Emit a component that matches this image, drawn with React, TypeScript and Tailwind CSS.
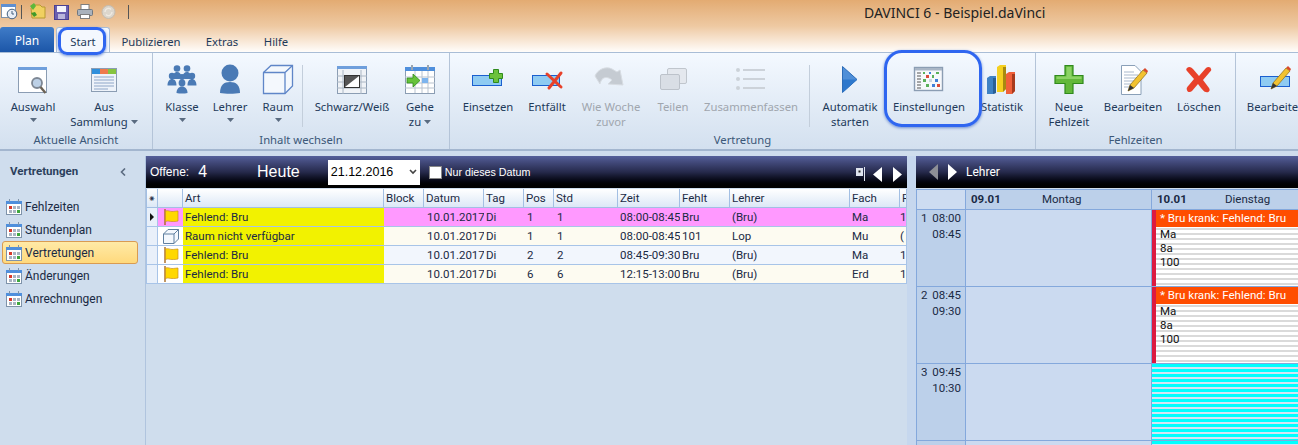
import type { ReactNode } from 'react';

const Caret = () => (
  <svg width="7" height="4" viewBox="0 0 7 4" className="inline-block">
    <path d="M0 0h7L3.5 4z" fill="#5a6b80" />
  </svg>
);

const IconBox = ({ children }: { children: ReactNode }) => (
  <svg width="40" height="36" viewBox="0 0 40 36">{children}</svg>
);

const BlueBar = () => <rect x="4.5" y="16.5" width="29" height="10" fill="#8fcbf2" stroke="#1a5fd0" />;

const icons: Record<string, ReactNode> = {
  auswahl: (
    <IconBox>
      <rect x="5.5" y="7.5" width="28" height="25" fill="#fff" stroke="#8b9db3" />
      <rect x="5" y="7" width="29" height="3" fill="#6f9fdc" />
      <circle cx="24" cy="23" r="5" fill="#bcd0e6" stroke="#7d8794" strokeWidth="1.8" />
      <path d="M27.5 27l5 6" stroke="#6b6255" strokeWidth="2.4" />
    </IconBox>
  ),
  sammlung: (
    <IconBox>
      <rect x="7.5" y="8.5" width="25" height="23" fill="#eef3fa" stroke="#8b9db3" />
      <rect x="8" y="9" width="8" height="5" fill="#2f8fdc" />
      <rect x="16" y="9" width="8" height="5" fill="#ef7a4c" />
      <rect x="24" y="9" width="8" height="5" fill="#86c440" />
      <path d="M10 17h20M10 20h20M10 23h20M10 26h20M10 29h14" stroke="#8ea6c8" />
    </IconBox>
  ),
  klasse: (
    <IconBox>
      <g fill="#4a7ab5">
        <circle cx="15" cy="8.5" r="3.3" />
        <circle cx="25" cy="8.5" r="3.3" />
        <circle cx="10" cy="16" r="3.2" />
        <circle cx="30" cy="16" r="3.2" />
        <circle cx="20" cy="17" r="3" />
        <path d="M10.5 19c0-5 2-7 4.500-7s4.500 2 4.500 5l-2 2zM20.500 17c0-3 2-5 4.500-5s4.500 2 4.500 7h-7z" />
        <path d="M5.500 25.500c0-4 2-6.500 4.500-6.500s4.500 2 4.500 6.500zM25.500 25.500c0-4.500 2-6.500 4.500-6.500s4.500 2.500 4.500 6.500z" />
        <circle cx="20" cy="23" r="3.4" />
        <path d="M14.500 33c0-4 2.500-6.500 5.500-6.500s5.500 2.500 5.500 6.500c-3 .8-8 .8-11 0z" />
      </g>
    </IconBox>
  ),
  lehrer: (
    <IconBox>
      <g fill="#4a7ab5">
        <circle cx="20" cy="13" r="8.5" />
        <path d="M10 33c0-8 4-11 10-11s10 3 10 11c-5 1-15 1-20 0z" />
      </g>
    </IconBox>
  ),
  raum: (
    <IconBox>
      <path d="M5.500 12.500L13 5.500H34.500V26L27 33.500H5.500z" fill="#f4f8fd" stroke="#5f86c8" strokeWidth="1.3" />
      <path d="M5.500 12.500H27V33.500M27 12.500L34.500 5.500" fill="none" stroke="#5f86c8" strokeWidth="1.3" />
    </IconBox>
  ),
  schwarz: (
    <IconBox>
      <rect x="5.5" y="8.5" width="29" height="25" fill="#f0f3f7" stroke="#8b9db3" />
      <rect x="5" y="6" width="30" height="3" fill="#6f9fdc" />
      <path d="M5 16h30M5 22h30M5 28h30M11 10v24M29 10v24" stroke="#aab6c4" />
      <rect x="12.5" y="15.5" width="15" height="12" fill="#fff" stroke="#333" />
      <path d="M13 27V16H27z" fill="#555" />
    </IconBox>
  ),
  gehe: (
    <IconBox>
      <rect x="5.5" y="8.5" width="29" height="25" fill="#fff" stroke="#8b9db3" />
      <rect x="5" y="7" width="30" height="4" fill="#4f8fdc" />
      <rect x="11" y="5" width="2" height="5" fill="#9aa5b0" />
      <rect x="27" y="5" width="2" height="5" fill="#9aa5b0" />
      <path d="M5 17h30M5 23h30M5 28h30M15 11v22M22 11v22M28 11v22" stroke="#b9c3cf" />
      <rect x="22" y="18" width="6" height="5" fill="#7db4ee" />
      <path d="M7 18h6v-4l7 6.500-7 6.500v-4H7z" fill="#66c23a" stroke="#2f8a1c" strokeWidth=".8" />
    </IconBox>
  ),
  einsetzen: (
    <IconBox>
      <rect x="4.5" y="15.5" width="29" height="10" fill="#8fcbf2" stroke="#1a5fd0" />
      <path d="M21.500 13.500h4v-4h5v4h4v5h-4v4h-5v-4h-4z" fill="#6cc23c" stroke="#2f8a1c" />
    </IconBox>
  ),
  entfaellt: (
    <IconBox>
      <rect x="5.5" y="15.5" width="27" height="10" fill="#8fcbf2" stroke="#1a5fd0" />
      <path d="M20 14l14 13M34 13L22 28" stroke="#e8412a" strokeWidth="3" strokeLinecap="round" />
    </IconBox>
  ),
  woche: (
    <IconBox>
      <path d="M4 16c3-7 11-10 17-7l5 3 3-2 3 15-15-1 4-4c-3-3-9-4-11 1-1 2-1 3-1 3z" fill="#c5cbd2" stroke="#d7dce2" />
    </IconBox>
  ),
  teilen: (
    <IconBox>
      <rect x="14.5" y="8.5" width="19" height="15" rx="1.5" fill="#e4e8ee" stroke="#c0c6cd" />
      <rect x="7.5" y="14.5" width="19" height="15" rx="1.5" fill="#d9dee5" stroke="#bcc2ca" />
    </IconBox>
  ),
  zusammen: (
    <IconBox>
      <g fill="#ccd2d9">
        <circle cx="7" cy="10" r="2" />
        <circle cx="7" cy="19" r="2" />
        <circle cx="7" cy="28" r="2" />
        <rect x="12" y="9" width="22" height="2" />
        <rect x="12" y="18" width="22" height="2" />
        <rect x="12" y="27" width="22" height="2" />
      </g>
    </IconBox>
  ),
  auto: (
    <IconBox>
      <path d="M12.500 6.500L27 19.500 12.500 32.500z" fill="#4f8fd8" stroke="#2c6cb8" />
      <path d="M13 19.500h14L13 32z" fill="#2e78cc" />
    </IconBox>
  ),
  einstellungen: (
    <IconBox>
      <rect x="5.5" y="7.5" width="28" height="23" fill="#f6f8fb" stroke="#8b9db3" strokeWidth="1.4" />
      <rect x="6" y="8" width="27" height="2.5" fill="#a9b6c6" />
      <path d="M8 13h4M8 16h4M8 19h4M8 22h4M8 25h4M8 28h4" stroke="#555" />
      <g>
        <rect x="14" y="12" width="2" height="2" fill="#5bb05b" />
        <rect x="20" y="12" width="2" height="2" fill="#3f7fd8" />
        <rect x="27" y="12" width="3" height="2" fill="#5bb05b" />
        <rect x="17" y="15" width="3" height="3" fill="#d94a3a" />
        <rect x="23" y="15" width="2" height="3" fill="#5bb05b" />
        <rect x="14" y="19" width="3" height="3" fill="#5bb05b" />
        <rect x="20" y="19" width="3" height="3" fill="#c9d4e0" />
        <rect x="26" y="19" width="3" height="3" fill="#3f7fd8" />
        <rect x="17" y="24" width="3" height="3" fill="#5bb05b" />
        <rect x="23" y="24" width="3" height="3" fill="#3f7fd8" />
        <rect x="28" y="24" width="3" height="3" fill="#d94a3a" />
      </g>
    </IconBox>
  ),
  statistik: (
    <IconBox>
      <path d="M5 18l3-2h6v17l-3 1H5z" fill="#3f82c4" />
      <path d="M11 18h3v15l-3 1z" fill="#2a5f96" />
      <path d="M15 7l3-2h6v24l-3 3h-6z" fill="#f5d020" />
      <path d="M21 7h3v22l-3 3z" fill="#a88a10" />
      <path d="M24 14l3-2h6v19l-3 3h-6z" fill="#f0603a" />
      <path d="M30 14h3v17l-3 3z" fill="#a83a1c" />
    </IconBox>
  ),
  neue: (
    <IconBox>
      <path d="M16 5.500h8v10h10v8H24v10h-8v-10H6v-8h10z" fill="#62b83a" stroke="#2f8a1c" strokeWidth="1.2" />
      <path d="M17.500 7h5v9.500h10v2.500h-25v-2.500h10z" fill="#8bd364" />
    </IconBox>
  ),
  bearbeiten: (
    <IconBox>
      <path d="M8.500 5.500H22l6 6v23H8.500z" fill="#fff" stroke="#8aa0b8" />
      <path d="M11 12h10M11 15h14M11 18h14M11 21h10M11 24h8M11 27h6" stroke="#a9b9cd" />
      <path d="M15 31l2-6L30 10l4 3-13 15z" fill="#f2c230" stroke="#8a6a15" strokeWidth=".7" />
      <path d="M30 10l4 3 1-2-3-3z" fill="#d9492b" />
      <path d="M15 31l2-6 4 3z" fill="#333" />
    </IconBox>
  ),
  loeschen: (
    <IconBox>
      <path d="M8 8c2-2 4-1 6 1l6 7 7-8c2-2 5-1 5 1 1 1-1 3-2 4l-6 7 6 8c2 3-1 5-3 4-2 0-3-2-5-4l-3-4-6 7c-2 2-5 1-5-1-1-2 1-4 2-5l5-6-7-8c-1-1-1-2 0-3z" fill="#e8412a" />
    </IconBox>
  ),
  bearbeite2: (
    <IconBox>
      <BlueBar />
      <path d="M15 29l2-6L30 8l4 3-13 15z" fill="#f2c230" stroke="#8a6a15" strokeWidth=".7" />
      <path d="M30 8l4 3 1-2-3-3z" fill="#d9492b" />
      <path d="M15 29l2-6 4 3z" fill="#333" />
    </IconBox>
  ),
};

type Btn = { w: string; icon: string; a: string; b?: string; caret?: 'below' | 'inline'; off?: boolean };

const RibbonButton = ({ w, icon, a, b, caret, off }: Btn) => (
  <div className={`flex flex-col items-center shrink-0 leading-[15px] whitespace-nowrap ${w} ${off ? 'text-[#a0a6ae]' : 'text-[#1e3a5a]'}`}>
    <div className="h-[36px] mb-[3px] flex justify-center">{icons[icon]}</div>
    <div>{a}</div>
    {b && (
      <div className="flex items-center gap-[3px]">
        {b}
        {caret === 'inline' && <Caret />}
      </div>
    )}
    {caret === 'below' && (
      <div className="h-[11px] flex items-center">
        <Caret />
      </div>
    )}
  </div>
);

const Group = ({ w, label, pl, children }: { w: string; label?: string; pl: string; children: ReactNode }) => (
  <div className={`flex flex-col shrink-0 border-r border-[#b4c4d8] ${w}`}>
    <div className={`flex h-[80px] pt-[7px] ${pl}`}>{children}</div>
    <div className="h-[14px] text-center leading-[14px] text-[#3c5878]">{label}</div>
  </div>
);

const Sep = () => <div className="w-px h-[62px] mt-[5px] bg-[#c3cedb] shrink-0" />;

const CalIcon = () => (
  <svg width="16" height="16" viewBox="0 0 16 16" className="shrink-0">
    <rect x=".5" y="2.5" width="15" height="13" fill="#fff" stroke="#7f93aa" />
    <rect x="0" y="2" width="16" height="3" fill="#4f8fdc" />
    <rect x="3" y="0" width="1" height="3" fill="#7f93aa" />
    <rect x="12" y="0" width="1" height="3" fill="#7f93aa" />
    <rect x="3" y="7" width="3" height="3" fill="#d9392b" />
    <rect x="7" y="7" width="3" height="3" fill="#a9b4c2" />
    <rect x="11" y="7" width="3" height="3" fill="#a9b4c2" />
    <rect x="3" y="11" width="3" height="3" fill="#a9b4c2" />
    <rect x="7" y="11" width="3" height="3" fill="#a9b4c2" />
    <rect x="11" y="11" width="3" height="3" fill="#3fa83f" />
  </svg>
);

const Flag = () => (
  <svg width="16" height="16" viewBox="0 0 16 16">
    <path d="M2 0v16" stroke="#a86a20" strokeWidth="1.4" />
    <path d="M2.500 2c3-1 4 .5 6.500.5s4-.5 6-.5v10c-2 .5-3.500.5-6 .5s-3.500-1-6.500 0z" fill="#ffd800" stroke="#c99020" strokeWidth=".7" />
  </svg>
);

const Cube = () => (
  <svg width="16" height="16" viewBox="0 0 16 16">
    <path d="M.5 6L5 1.500h10.500V11L11 15.500H.5z" fill="#f4f8fd" stroke="#5f7f9f" />
    <path d="M.5 6H11v9.500M11 6l4.500-4.500" fill="none" stroke="#5f7f9f" />
  </svg>
);

const tableCols = 'grid grid-cols-[12px_25px_201px_40px_60px_40px_30px_64px_62px_50px_120px_50px_7px]';

const heads = ['Art', 'Block', 'Datum', 'Tag', 'Pos', 'Std', 'Zeit', 'Fehlt', 'Lehrer', 'Fach', 'R'];

const rows = [
  { icon: 'flag', art: 'Fehlend: Bru', tag: 'Di', pos: '1', std: '1', zeit: '08:00-08:45', fehlt: 'Bru', lehrer: '(Bru)', fach: 'Ma', r: '1', bg: 'bg-[#ff99ff]', head: 'bg-[#e9f0fa]', ic: 'bg-[#ff99ff]', cur: true },
  { icon: 'cube', art: 'Raum nicht verfügbar', tag: 'Di', pos: '1', std: '1', zeit: '08:00-08:45', fehlt: '101', lehrer: 'Lop', fach: 'Mu', r: '(', bg: 'bg-[#fdfbf1]', head: 'bg-[#e9f0fa]', ic: 'bg-white' },
  { icon: 'flag', art: 'Fehlend: Bru', tag: 'Di', pos: '2', std: '2', zeit: '08:45-09:30', fehlt: 'Bru', lehrer: '(Bru)', fach: 'Ma', r: '1', bg: 'bg-[#f2f6fd]', head: 'bg-[#e9f0fa]', ic: 'bg-white' },
  { icon: 'flag', art: 'Fehlend: Bru', tag: 'Di', pos: '6', std: '6', zeit: '12:15-13:00', fehlt: 'Bru', lehrer: '(Bru)', fach: 'Erd', r: '1', bg: 'bg-[#fdfbf1]', head: 'bg-[#e9f0fa]', ic: 'bg-white' },
];

const Cell = ({ children, cls = '' }: { children?: ReactNode; cls?: string }) => (
  <div className={`overflow-hidden whitespace-nowrap border-b border-[#a8c4e8] h-[19px] leading-[18px] ${cls}`}>{children}</div>
);

const DarkBar = ({ children }: { children: ReactNode }) => (
  <div className="flex items-center h-[32px] text-white bg-gradient-to-b from-[#555f9a] via-[#262a4c] to-[#000000]">{children}</div>
);

const stripesGray = 'bg-[repeating-linear-gradient(to_bottom,#ffffff_0px,#ffffff_3px,#dadada_3px,#dadada_5px)]';
const stripesCyan = 'bg-[repeating-linear-gradient(to_bottom,#00ffff_0px,#00ffff_3px,#d4e4f4_3px,#d4e4f4_5px)]';

const Lesson = () => (
  <div className="flex h-[77px] border-b border-[#84a8dc]">
    <div className="w-[4px] bg-[#dc1a40]" />
    <div className={`flex-1 ${stripesGray}`}>
      <div className="h-[17px] pl-[4px] leading-[16px] bg-[#ff4d00] text-white whitespace-nowrap text-[11.6px]">* Bru krank: Fehlend: Bru</div>
      <div className="pl-[4px] leading-[14px] text-[#111]">Ma</div>
      <div className="pl-[4px] leading-[14px] text-[#111]">8a</div>
      <div className="pl-[4px] leading-[14px] text-[#111]">100</div>
    </div>
  </div>
);

const TimeCell = ({ n, a, b }: { n: string; a: string; b: string }) => (
  <div className="flex h-[77px] border-b border-r border-[#84a8dc] bg-[#bcd0ea] px-[4px] text-[#1a2a44] leading-[16px]">
    <div className="w-[14px]">{n}</div>
    <div className="flex-1 text-right">
      <div>{a}</div>
      <div>{b}</div>
    </div>
  </div>
);

export default function App() {
  return (
    <div className="relative w-[1298px] h-[445px] overflow-hidden bg-[#cfdded] text-[11.3px] font-['Noto_Sans',sans-serif]">
      {/* title bar with tabs */}
      <div className="h-[52px] bg-gradient-to-b from-[#e3ab72] via-[#eec9a2] to-[#fffdfb]">
        <div className="flex items-start h-[27px] pl-[1px] relative">
          <svg width="130" height="20" viewBox="0 0 130 20">
            <rect x=".5" y="4.5" width="14" height="13" fill="#fff" stroke="#7f93aa" />
            <rect x="0" y="4" width="15" height="3" fill="#5f8fd0" />
            <circle cx="11" cy="14" r="4.8" fill="#e8eef6" stroke="#44607f" />
            <path d="M11 11v3h2" stroke="#44607f" fill="none" />
            <path d="M20.500 5v14M127.500 5v14" stroke="#555" />
            <path d="M30 8l4-3h5l2 2h3v11H31z" fill="#f0d060" stroke="#b89a30" />
            <path d="M29 6l4-3 2 3-3 4z" fill="#5cb83a" />
            <path d="M33 17l-3-4 4-1 2 3z" fill="#3f9a2a" />
            <rect x="53.5" y="5.5" width="14" height="14" fill="#6a5fb0" stroke="#4a4090" />
            <rect x="56" y="6" width="9" height="6" fill="#f4f4fb" />
            <rect x="57" y="14" width="7" height="5" fill="#b9b5dc" />
            <rect x="80" y="4.5" width="8" height="5" fill="#fff" stroke="#7f7f7f" />
            <rect x="76.5" y="9.5" width="15" height="6" rx="1" fill="#aab2bc" stroke="#6f7780" />
            <rect x="79.5" y="14.5" width="9" height="4" fill="#fff" stroke="#7f7f7f" />
            <circle cx="107.5" cy="12" r="6.5" fill="#dcd6cc" stroke="#c4bcb0" />
            <path d="M104 12a3.500 3.500 0 016-2.500M111 12a3.500 3.500 0 01-6 2.500" stroke="#efeae2" fill="none" strokeWidth="1.4" />
          </svg>
          <div className="absolute left-[864px] top-[3px] text-[14px] leading-[20px] text-[#222] whitespace-nowrap">DAVINCI 6 - Beispiel.daVinci</div>
        </div>
        <div className="flex h-[25px] items-end">
          <div className="w-[54px] h-[25px] rounded-t-[3px] bg-gradient-to-b from-[#3f7cc8] to-[#1c56a8] text-white text-center leading-[27px] text-[12px]">Plan</div>
          <div className="w-[54px] ml-[2px] h-[25px] rounded-t-[3px] bg-[#f4f8fe] border border-b-0 border-[#a9bdd6] text-center leading-[28px] text-[#1e3a5a]">Start</div>
          <div className="w-[74px] ml-[4px] text-center leading-[20px] text-[#1e3a5a]">Publizieren</div>
          <div className="w-[50px] ml-[9px] text-center leading-[20px] text-[#1e3a5a]">Extras</div>
          <div className="w-[40px] ml-[9px] text-center leading-[20px] text-[#1e3a5a]">Hilfe</div>
        </div>
      </div>

      {/* ribbon */}
      <div className="flex h-[99px] border-t border-b-2 border-t-[#a9bdd6] border-b-[#a3b6cf] bg-gradient-to-b from-[#f4f9ff] to-[#d3e0ef]">
        <Group w="w-[153px]" pl="" label="Aktuelle Ansicht">
          <RibbonButton w="w-[66px]" icon="auswahl" a="Auswahl" caret="below" />
          <RibbonButton w="w-[76px]" icon="sammlung" a="Aus" b="Sammlung" caret="inline" />
        </Group>
        <Group w="w-[297px]" pl="pl-[5px]" label="Inhalt wechseln">
          <RibbonButton w="w-[48px]" icon="klasse" a="Klasse" caret="below" />
          <RibbonButton w="w-[48px]" icon="lehrer" a="Lehrer" caret="below" />
          <RibbonButton w="w-[48px]" icon="raum" a="Raum" caret="below" />
          <Sep />
          <RibbonButton w="w-[98px]" icon="schwarz" a="Schwarz/Weiß" />
          <RibbonButton w="w-[38px]" icon="gehe" a="Gehe" b="zu" caret="inline" />
        </Group>
        <Group w="w-[586px]" pl="pl-[8px]" label="Vertretung">
          <RibbonButton w="w-[60px]" icon="einsetzen" a="Einsetzen" />
          <RibbonButton w="w-[58px]" icon="entfaellt" a="Entfällt" />
          <RibbonButton w="w-[70px]" icon="woche" a="Wie Woche" b="zuvor" off />
          <RibbonButton w="w-[54px]" icon="teilen" a="Teilen" off />
          <RibbonButton w="w-[102px]" icon="zusammen" a="Zusammenfassen" off />
          <div className="w-[7px]" />
          <Sep />
          <div className="w-[5px]" />
          <RibbonButton w="w-[70px]" icon="auto" a="Automatik" b="starten" />
          <RibbonButton w="w-[88px]" icon="einstellungen" a="Einstellungen" />
          <RibbonButton w="w-[58px]" icon="statistik" a="Statistik" />
        </Group>
        <Group w="w-[200px]" pl="pl-[4px]" label="Fehlzeiten">
          <RibbonButton w="w-[58px]" icon="neue" a="Neue" b="Fehlzeit" />
          <RibbonButton w="w-[70px]" icon="bearbeiten" a="Bearbeiten" />
          <RibbonButton w="w-[62px]" icon="loeschen" a="Löschen" />
        </Group>
        <div className="flex-1 flex pt-[7px] pl-[10px]">
          <RibbonButton w="w-[60px]" icon="bearbeite2" a="Bearbeiten" />
        </div>
      </div>

      {/* main area */}
      <div className="flex pt-[5px] h-[294px] font-['Roboto',sans-serif] text-[11.5px]">
        <div className="w-[146px] shrink-0 border-r border-[#b0c4de] pt-[8px] text-[#1a2a44] text-[12px]">
          <div className="flex items-center justify-between pl-[10px] pr-[19px] h-[16px] font-bold text-[11.5px] text-[#2b3f5c]">
            <span>Vertretungen</span>
            <svg width="6" height="8" viewBox="0 0 6 8">
              <path d="M5 0.5L1.500 4 5 7.500" fill="none" stroke="#5b6b80" strokeWidth="1.6" />
            </svg>
          </div>
          <div className="mt-[15px] flex flex-col pl-[2px] pr-[7px]">
            {['Fehlzeiten', 'Stundenplan', 'Vertretungen', 'Änderungen', 'Anrechnungen'].map((s) => (
              <div key={s} className={`flex items-center gap-[3px] h-[23px] pl-[3px] rounded-[3px] border ${s === 'Vertretungen' ? 'bg-gradient-to-b from-[#ffeaa6] to-[#ffd97c] border-[#d99b52]' : 'border-transparent'}`}>
                <CalIcon />
                <span>{s}</span>
              </div>
            ))}
          </div>
        </div>

        <div className="w-[761px] shrink-0">
          <DarkBar>
            <span className="ml-[4px] font-['Liberation_Sans',sans-serif] text-[12px]">Offene:</span>
            <span className="ml-[9px] text-[16px] font-['Liberation_Sans',sans-serif]">4</span>
            <span className="ml-[50px] text-[16px] font-['Liberation_Sans',sans-serif]">Heute</span>
            <div className="ml-[28px] w-[92px] h-[25px] bg-white flex items-center justify-between pl-[3px] pr-[3px] text-black text-[12.5px] font-['Liberation_Sans',sans-serif]">
              <span>21.12.2016</span>
              <svg width="8" height="6" viewBox="0 0 8 6">
                <path d="M1 1l3 3 3-3" fill="none" stroke="#444" strokeWidth="1.6" />
              </svg>
            </div>
            <div className="ml-[9px] w-[13px] h-[13px] bg-white border border-[#888]" />
            <span className="ml-[3px] text-[10.7px] font-['Liberation_Sans',sans-serif]">Nur dieses Datum</span>
            <div className="flex-1" />
            <svg width="51" height="20" viewBox="0 0 51 20">
              <rect x="0" y="6" width="7" height="8" fill="#dfe4ee" />
              <rect x="2.5" y="8.5" width="2" height="2" fill="#222" />
              <path d="M8.500 5v14" stroke="#dfe4ee" />
              <path d="M26 5v15l-9-7.500z" fill="#fff" />
              <path d="M37 5v15l9-7.500z" fill="#fff" />
            </svg>
          </DarkBar>
          <div className={`${tableCols} mt-px text-[#1a2a44]`}>
            <div className="h-[19px] border-b border-r border-l border-[#a3bfe3] bg-gradient-to-b from-white to-[#dce8f6] text-center leading-[17px] text-[10px]">⁕</div>
            <div className="h-[19px] border-b border-r border-[#a3bfe3] bg-gradient-to-b from-white to-[#dce8f6]" />
            {heads.map((h) => (
              <div key={h} className="h-[19px] overflow-hidden border-b border-r border-[#a3bfe3] bg-gradient-to-b from-white to-[#dce8f6] pl-[2px] leading-[19px]">
                {h}
              </div>
            ))}
            {rows.map((r, i) => (
              <div key={i} className="contents">
                <Cell cls={`${r.head} border-l border-r flex items-center justify-center`}>
                  {r.cur && (
                    <svg width="4" height="8" viewBox="0 0 4 8">
                      <path d="M0 0l4 4-4 4z" fill="#111" />
                    </svg>
                  )}
                </Cell>
                <Cell cls={`${r.ic} flex items-center justify-center`}>{r.icon === 'flag' ? <Flag /> : <Cube />}</Cell>
                <Cell cls="bg-[#f2f200] pl-[2px]">{r.art}</Cell>
                <Cell cls={r.bg} />
                <Cell cls={`${r.bg} pl-[3px]`}>10.01.2017</Cell>
                <Cell cls={`${r.bg} pl-[2px]`}>{r.tag}</Cell>
                <Cell cls={`${r.bg} pl-[3px]`}>{r.pos}</Cell>
                <Cell cls={`${r.bg} pl-[3px]`}>{r.std}</Cell>
                <Cell cls={`${r.bg} pl-[2px]`}>{r.zeit}</Cell>
                <Cell cls={`${r.bg} pl-[2px]`}>{r.fehlt}</Cell>
                <Cell cls={`${r.bg} pl-[2px]`}>{r.lehrer}</Cell>
                <Cell cls={`${r.bg} pl-[2px]`}>{r.fach}</Cell>
                <Cell cls={`${r.bg} border-r`}>{r.r}</Cell>
              </div>
            ))}
          </div>
        </div>

        <div className="w-[9px] shrink-0 bg-[#c6d7ee]" />

        <div className="flex-1 min-w-0">
          <DarkBar>
            <svg width="36" height="18" viewBox="0 0 36 18" className="ml-[12px]">
              <path d="M10 1v16L1 9z" fill="#8d8f96" />
              <path d="M20 1v16l9-8z" fill="#fff" />
            </svg>
            <span className="ml-[2px] text-[12px]">Lehrer</span>
          </DarkBar>
          <div className="mt-px grid grid-cols-[49px_186px_1fr] text-[#1a2a44] border-l border-[#84a8dc]">
            <div className="h-[21px] border-y border-r border-[#84a8dc] bg-[#cddcf1]" />
            <div className="flex h-[21px] border-y border-r border-[#84a8dc] bg-[#bcd0ea] leading-[19px]">
              <span className="pl-[5px] w-[76px] font-bold">09.01</span>
              <span>Montag</span>
            </div>
            <div className="flex h-[21px] border-y border-[#84a8dc] bg-[#bcd0ea] leading-[19px]">
              <span className="pl-[5px] w-[73px] font-bold">10.01</span>
              <span>Dienstag</span>
            </div>
            <TimeCell n="1" a="08:00" b="08:45" />
            <div className="h-[77px] border-b border-r border-[#84a8dc] bg-[#cbdaf0]" />
            <Lesson />
            <TimeCell n="2" a="08:45" b="09:30" />
            <div className="h-[77px] border-b border-r border-[#84a8dc] bg-[#cbdaf0]" />
            <Lesson />
            <TimeCell n="3" a="09:45" b="10:30" />
            <div className="h-[77px] border-b border-r border-[#84a8dc] bg-[#cbdaf0]" />
            <div className={`h-[77px] border-b border-[#84a8dc] ${stripesCyan}`} />
            <div className="h-[10px] border-r border-[#84a8dc] bg-[#bcd0ea]" />
            <div className="h-[10px] border-r border-[#84a8dc] bg-[#cbdaf0]" />
            <div className={`h-[10px] ${stripesCyan}`} />
          </div>
        </div>
      </div>

      {/* callout frames */}
      <div className="absolute left-[58px] top-[27px] w-[48px] h-[28px] rounded-[9px] border-[3px] border-[#2f66f0] shadow-[0_1px_3px_#6f8fd0]" />
      <div className="absolute left-[884px] top-[50px] w-[98px] h-[77px] rounded-[18px] border-[3px] border-[#2f66f0] shadow-[0_1px_3px_#6f8fd0]" />
    </div>
  );
}
